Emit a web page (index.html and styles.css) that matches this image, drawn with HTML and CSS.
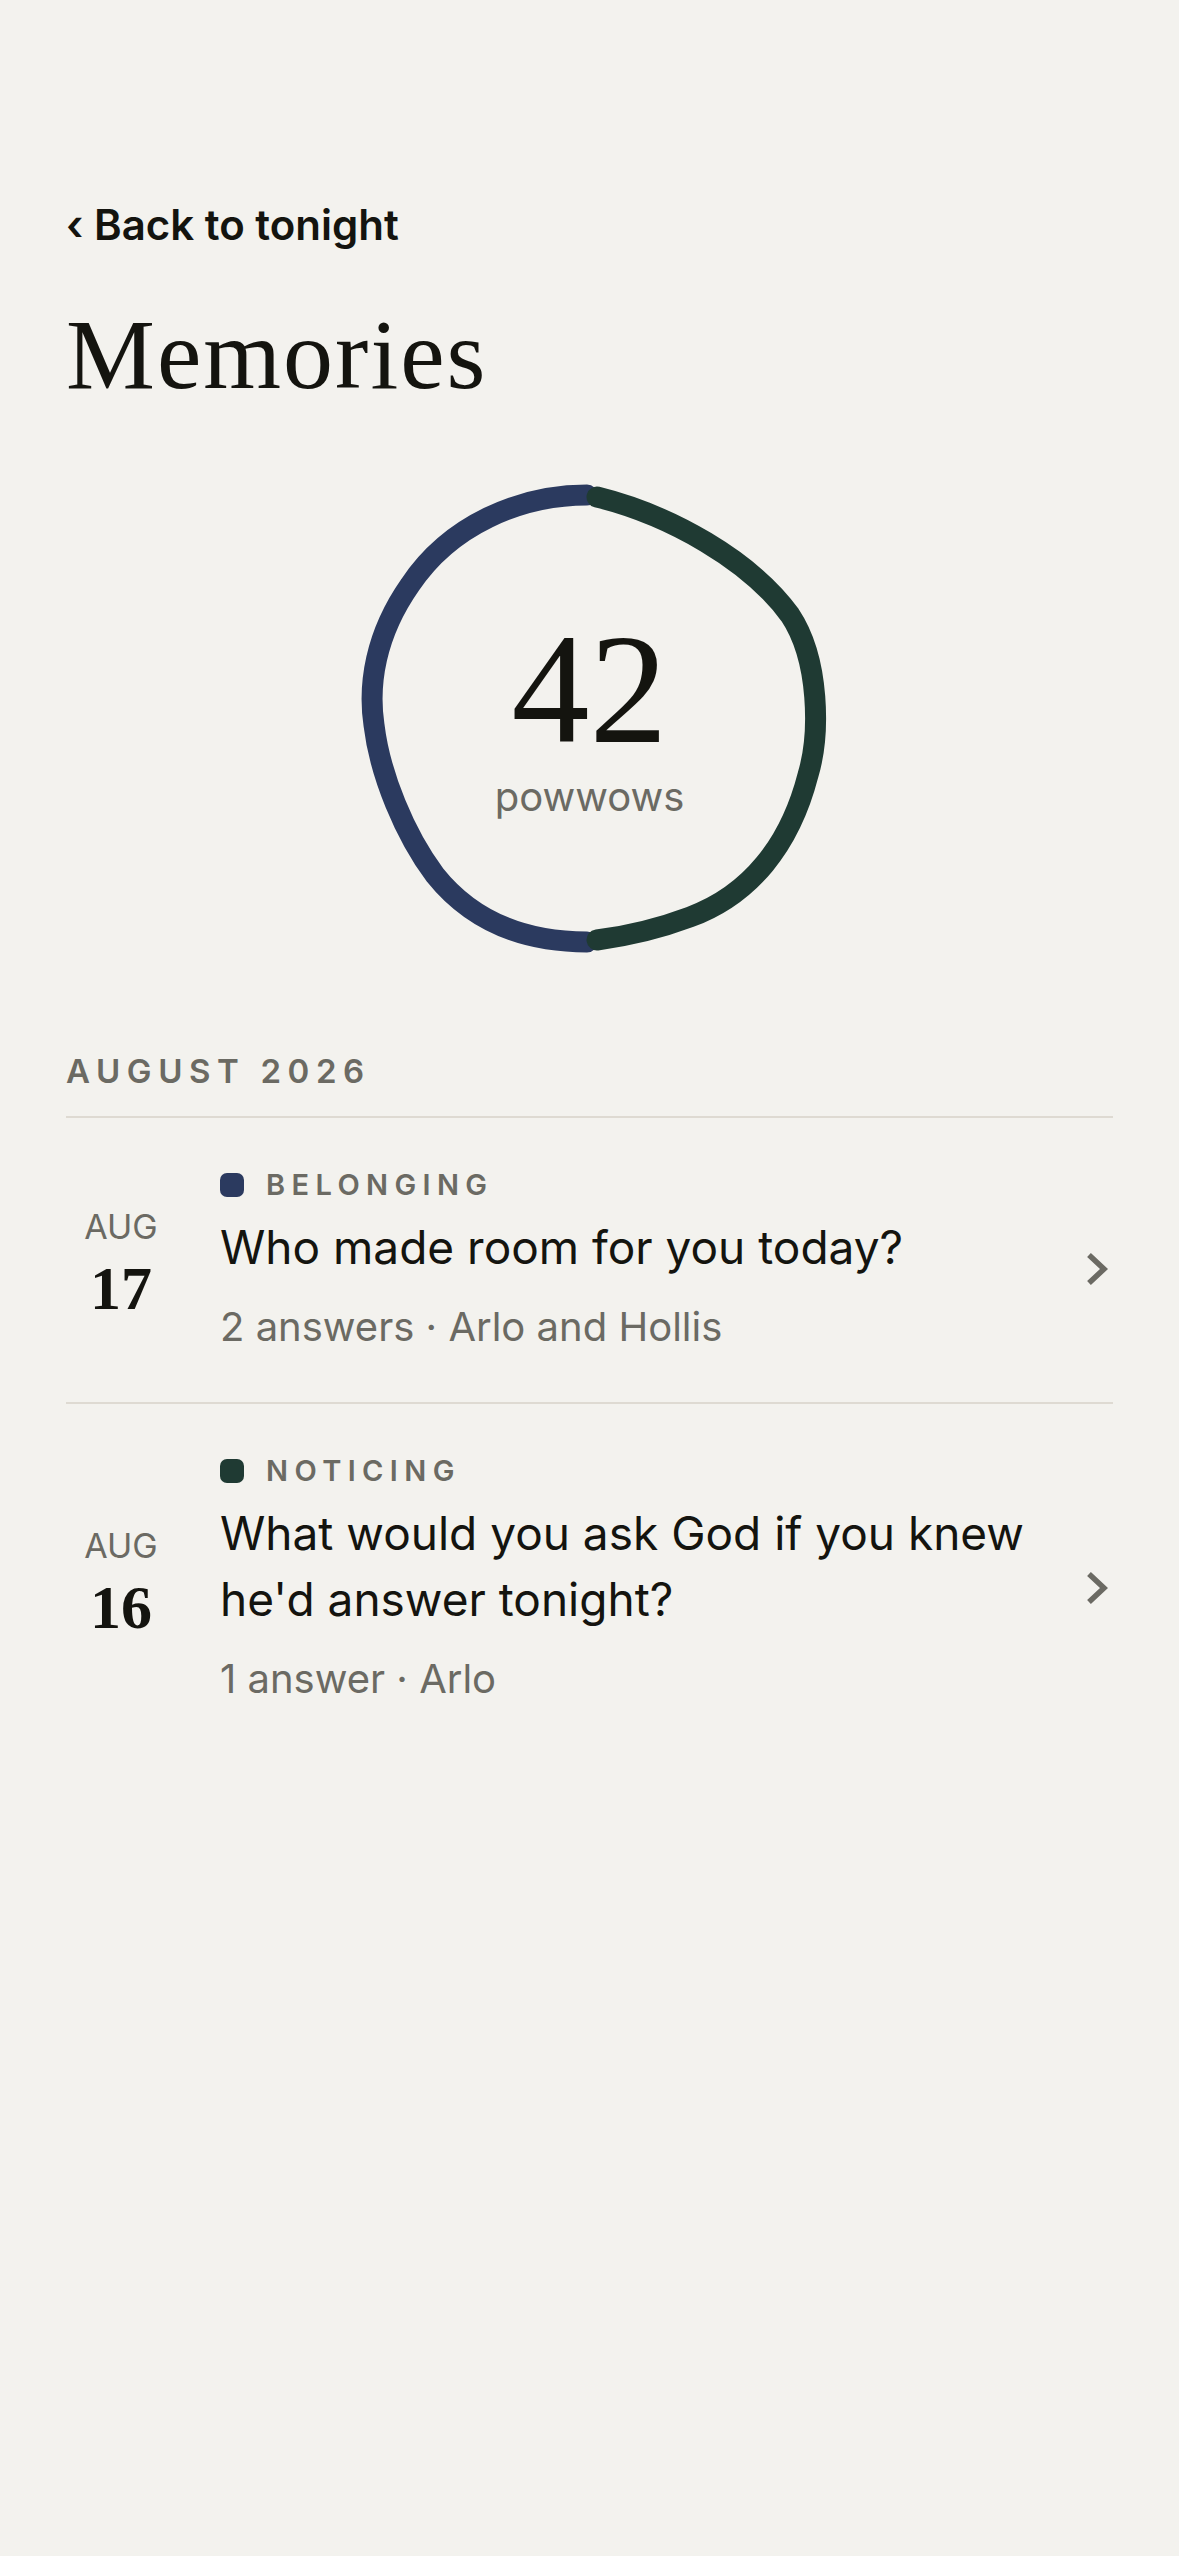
FILE: index.html
```html
<!DOCTYPE html>
<html lang="en">

<head>
    <meta charset="UTF-8">
    <meta name="viewport" content="width=device-width, initial-scale=1.0">
    <title>Memories</title>
    <link rel="stylesheet" href="styles.css">
</head>

<body>
    <div class="page">
        <a class="back" href="#">&lsaquo; Back to tonight</a>
        <h1 class="title">Memories</h1>

        <!-- hand drawn ring, blue half + green half -->
        <div class="ring">
            <svg class="ring-art" width="480" height="480" viewBox="0 0 480 480">
                <path class="ring-blue" d="M237,20 C170,20 100,50 60,110 C25,160 18,210 24,250 C30,300 55,360 85,400 C125,450 180,467 237,467" />
                <path class="ring-green" d="M247,22 C320,40 400,85 440,140 C470,185 470,260 458,300 C440,370 400,420 340,442 C300,457 270,462 247,465" />
            </svg>
            <div class="ring-count">42</div>
            <div class="ring-label">powwows</div>
        </div>

        <h2 class="month">AUGUST 2026</h2>
        <ul class="memory-list">
            <li class="memory">
                <div class="date">
                    <span class="date-month">AUG</span>
                    <span class="date-day">17</span>
                </div>
                <div class="memory-body">
                    <div class="tag"><span class="tag-dot blue"></span>BELONGING</div>
                    <div class="question">Who made room for you today?</div>
                    <div class="meta">2 answers &middot; Arlo and Hollis</div>
                </div>
                <svg class="chev" width="22" height="32" viewBox="0 0 22 32">
                    <path d="M3,2 L18,16 L3,30" />
                </svg>
            </li>
            <li class="memory">
                <div class="date">
                    <span class="date-month">AUG</span>
                    <span class="date-day">16</span>
                </div>
                <div class="memory-body">
                    <div class="tag"><span class="tag-dot green"></span>NOTICING</div>
                    <div class="question">What would you ask God if you knew he'd answer tonight?</div>
                    <div class="meta">1 answer &middot; Arlo</div>
                </div>
                <svg class="chev" width="22" height="32" viewBox="0 0 22 32">
                    <path d="M3,2 L18,16 L3,30" />
                </svg>
            </li>
        </ul>
    </div>
</body>

</html>
```

FILE: styles.css
```css
* {
    margin: 0;
    padding: 0;
    box-sizing: border-box;
}

body {
    background: #f3f2ee;
    color: #14140f;
    font-family: Inter, "Noto Sans", sans-serif;
}

li {
    list-style: none;
}

.page {
    min-height: 2556px;
    padding: 198px 66px 0;
}

.back {
    display: block;
    font-size: 42px;
    line-height: 53px;
    font-weight: 600;
    color: #14140f;
    text-decoration: none;
}

.title {
    margin-top: 52px;
    font-family: "Liberation Serif", serif;
    font-weight: 400;
    font-size: 100px;
    line-height: 103px;
    letter-spacing: 2px;
}

/* ring */
.ring {
    position: relative;
    width: 480px;
    height: 480px;
    margin: 69px auto 0;
    padding-top: 132px;
    display: flex;
    flex-direction: column;
    align-items: center;
}

.ring-art {
    position: absolute;
    top: 0;
    left: 0;
}

.ring-art path {
    fill: none;
    stroke-width: 21;
    stroke-linecap: round;
}

.ring-blue {
    stroke: #2b3a5f;
}

.ring-green {
    stroke: #1f3a33;
}

.ring-count {
    position: relative;
    font-family: "Liberation Serif", serif;
    font-size: 156px;
    line-height: 166px;
}

.ring-label {
    position: relative;
    font-size: 40px;
    line-height: 48px;
    color: #6b6a63;
}

/* list */
.month {
    margin-top: 96px;
    font-size: 33px;
    line-height: 40px;
    font-weight: 600;
    letter-spacing: 0.2em;
    color: #6b6a63;
    padding-bottom: 25px;
    border-bottom: 2px solid #dedad2;
}

.memory {
    display: flex;
    align-items: center;
    padding: 51px 0 51px;
    border-bottom: 2px solid #dedad2;
}

.memory:last-child {
    border-bottom: none;
}

.date {
    width: 110px;
    flex-shrink: 0;
    display: flex;
    flex-direction: column;
    align-items: center;
    margin: 10px 44px 0 0;
}

.date-month {
    font-size: 34px;
    line-height: 40px;
    color: #6b6a63;
}

.date-day {
    margin-top: 6px;
    font-family: "Liberation Serif", serif;
    font-weight: 700;
    font-size: 62px;
    line-height: 70px;
}

.memory-body {
    flex: 1;
}

.tag {
    display: flex;
    align-items: center;
    font-size: 29px;
    line-height: 32px;
    font-weight: 600;
    letter-spacing: 0.22em;
    color: #6b6a63;
}

.tag-dot {
    width: 24px;
    height: 24px;
    border-radius: 7px;
    margin-right: 22px;
}

.tag-dot.blue {
    background: #2b3a5f;
}

.tag-dot.green {
    background: #1f3a33;
}

.question {
    margin-top: 13px;
    font-size: 46px;
    line-height: 66px;
    padding-right: 40px;
}

.meta {
    margin-top: 23px;
    font-size: 40px;
    line-height: 48px;
    color: #6b6a63;
}

.chev {
    flex-shrink: 0;
    margin: 18px 5px 0 0;
}

.chev path {
    fill: none;
    stroke: #6b6a63;
    stroke-width: 5.5;
}
```
